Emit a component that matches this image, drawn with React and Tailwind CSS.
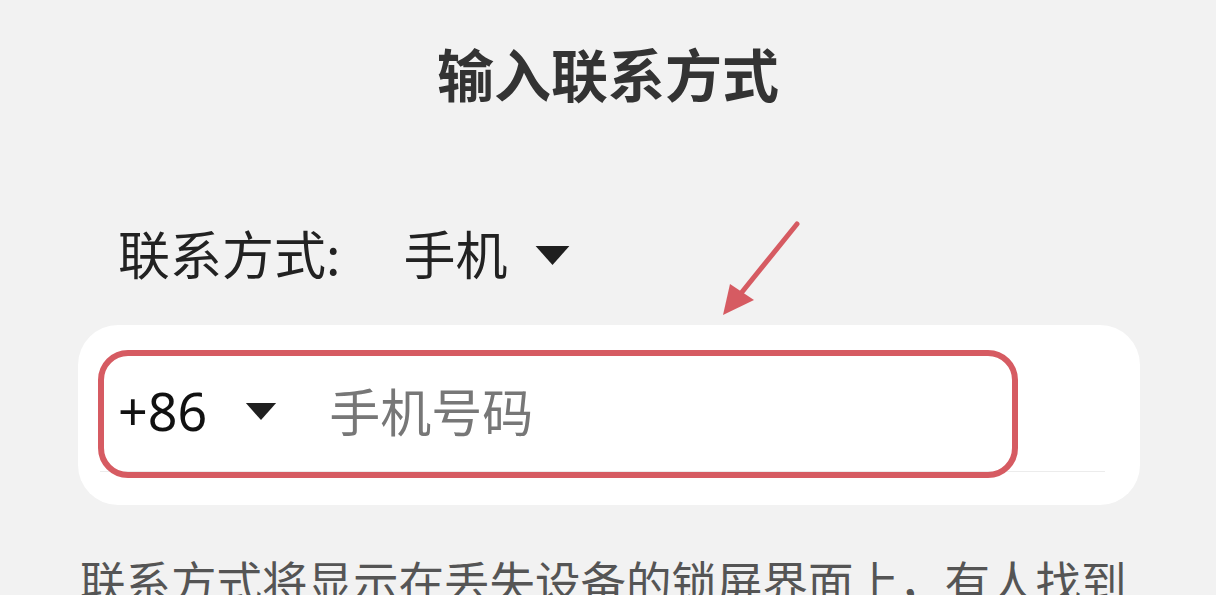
import React from 'react';

const font = { fontFamily: '"Noto Sans CJK SC", "Noto Sans", sans-serif' };

function Caret({ w, h }) {
    return (
        <svg width={w} height={h} viewBox="0 0 32 18">
            <path d="M0 0 L32 0 L16 18 Z" fill="#1f1f1f" />
        </svg>
    );
}

export default function App() {
    return (
        <div className="relative w-[1216px] h-[595px] overflow-hidden bg-[#f2f2f2]" style={font}>
            <div className="h-[144px] flex items-center justify-center">
                <h1 className="text-[57px] leading-none font-bold text-[#333]">输入联系方式</h1>
            </div>

            <div className="mt-[74px] h-[70px] flex items-center pl-[118px] text-[52px] leading-none text-[#222]">
                <span>联系方式:</span>
                <span className="ml-[63px]">手机</span>
                <span className="ml-[28px] mt-[4px]"><Caret w={35} h={19} /></span>
            </div>

            <div className="relative mt-[37px] ml-[78px] w-[1062px] h-[180px] bg-white rounded-[40px]">
                <div className="absolute left-[22px] right-[35px] top-[25px] h-[122px] flex items-center border-b border-[#ececec]">
                    <span className="ml-[18px] text-[52px] leading-none text-[#111]" style={{ fontFamily: '"Noto Sans", sans-serif' }}>+86</span>
                    <span className="ml-[38px] mt-[2px]"><Caret w={32} h={17} /></span>
                    <span className="ml-[52px] text-[51px] leading-none text-[#777]">手机号码</span>
                </div>
                <div className="absolute left-[20px] top-[25px] w-[920px] h-[128px] border-[6px] border-[#d65b62] rounded-[30px]" />
            </div>

            <svg className="absolute left-0 top-0" width="1216" height="595">
                <line x1="797" y1="224" x2="738" y2="297" stroke="#d65b62" strokeWidth="5" strokeLinecap="round" />
                <path d="M723 315 L730 284 L754 300 Z" fill="#d65b62" />
            </svg>

            <p className="mt-[53px] pl-[80px] text-[45.5px] leading-none text-[#555] whitespace-nowrap">
                联系方式将显示在丢失设备的锁屏界面上，有人找到
            </p>
        </div>
    );
}
